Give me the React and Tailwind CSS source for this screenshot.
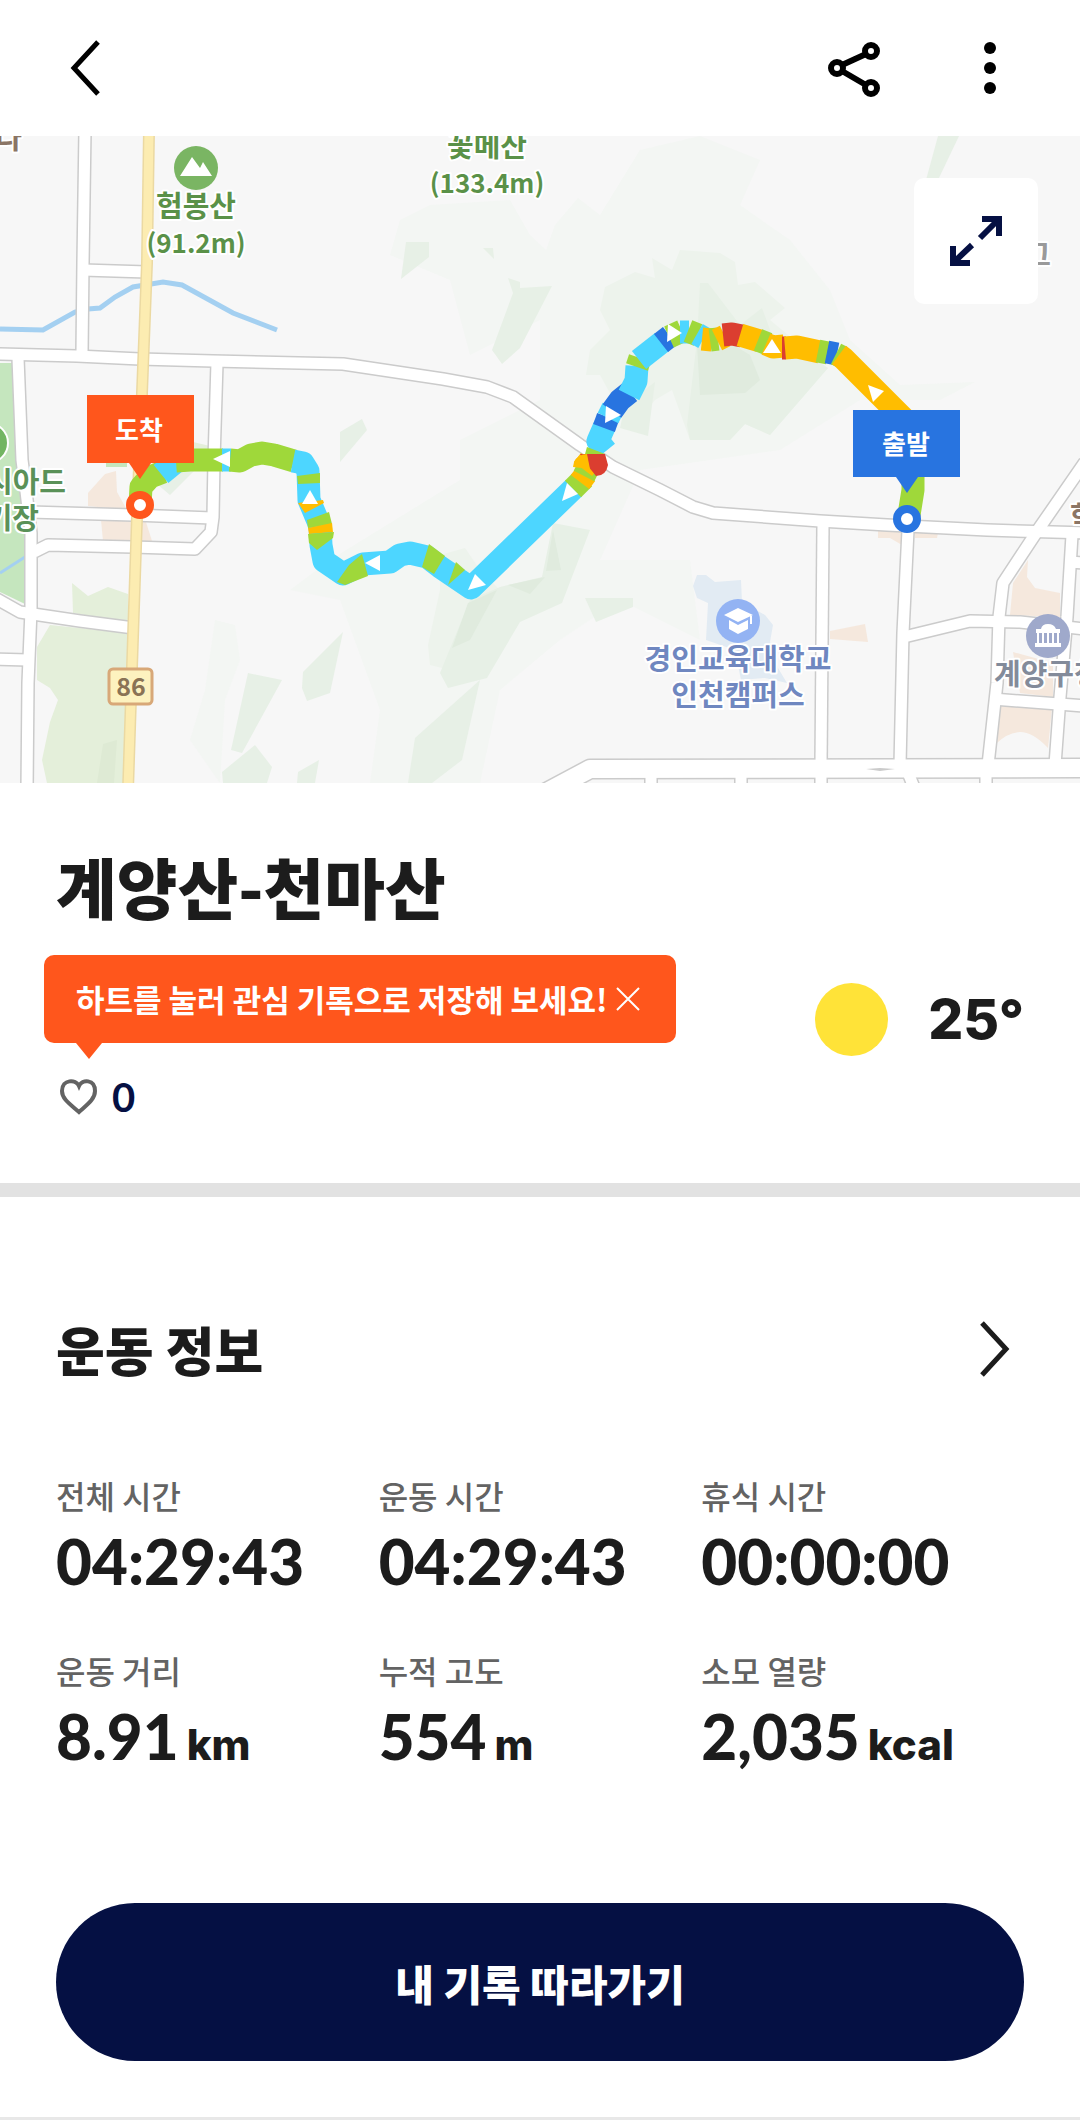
import { useState } from "react";

const CYAN = "#4dd6ff";
const BLUE = "#2874e0";
const GREEN = "#9fd83a";
const AMBER = "#ffbd00";
const RED = "#db3e30";

// Track pieces coloured by speed
const segments = [
  { d: "M140 505 L141 487 L150 477 L163 472", color: GREEN },
  { d: "M161 474 L178 460", color: CYAN },
  { d: "M176 461 L190 460 L223 460", color: GREEN },
  { d: "M222 460 L231 460", color: CYAN },
  { d: "M230 460 L240 461 L251 455 L262 453 L274 455 L294 461", color: GREEN },
  {
    d: "M293 461 L303 463 L308 471 L309 500 L320 526 L321 545 L324 561 L343 574 L363 564 L390 562 L400 555 L410 553 L427 557 L440 567 L471 588 L574 488",
    color: CYAN,
  },
  { d: "M297 476 L320 473 L320 483 L298 484 Z", color: GREEN, fill: true },
  { d: "M298 503 L323 500 L324 503 L305 513 Z", color: AMBER, fill: true },
  { d: "M307 520 L329 512 L332 524 L308 528 Z", color: GREEN, fill: true },
  { d: "M308 528 L332 523 L333 532 L309 534 Z", color: AMBER, fill: true },
  { d: "M308 534 L334 532 L333 538 L317 550 L309 543 Z", color: GREEN, fill: true },
  { d: "M349 565 L362 554 L368 576 L345 585 L337 582 Z", color: GREEN, fill: true },
  { d: "M429 544 L445 556 L434 574 L422 567 Z", color: GREEN, fill: true },
  { d: "M456 562 L465 570 L448 585 Z", color: GREEN, fill: true },
  { d: "M573 489 L584 478", color: GREEN },
  { d: "M580 482 L586 474", color: AMBER },
  { d: "M584 476 L588 468", color: GREEN },
  { d: "M583 469 L590 460", color: AMBER },
];

const upperSegments = [
  { d: "M606 451 L598 441 L605 425", color: CYAN },
  { d: "M604 428 L608 417", color: BLUE },
  { d: "M608 418 L613 408", color: CYAN },
  { d: "M612 411 L620 400 L630 392", color: BLUE },
  { d: "M629 395 L636 381 L637 366", color: CYAN },
  { d: "M637 367 L640 358", color: GREEN },
  { d: "M639 360 L662 342", color: CYAN },
  { d: "M661 343 L670 336", color: BLUE },
  { d: "M669 337 L682 331", color: GREEN },
  { d: "M680 332 L689 332", color: CYAN },
  { d: "M688 331 L698 335", color: GREEN },
  { d: "M697 334 L704 338", color: CYAN },
  { d: "M702 339 L712 340", color: AMBER },
  { d: "M710 340 L718 339", color: GREEN },
  { d: "M717 340 L725 336", color: AMBER },
  { d: "M723 335 L732 334 L742 336", color: RED },
  { d: "M740 335 L760 341", color: AMBER },
  { d: "M758 340 L768 344", color: GREEN },
  { d: "M766 344 L773 347 L784 346", color: AMBER },
  { d: "M782 348 L786 348", color: RED },
  { d: "M785 348 L797 347 L820 352", color: AMBER },
  { d: "M818 351 L828 353", color: GREEN },
  { d: "M827 352 L837 354", color: BLUE },
  { d: "M836 354 L842 357", color: GREEN },
  { d: "M839 355 L843 358 L905 420", color: AMBER },
  { d: "M913 474 L913 490 L909 515", color: GREEN },
];

const arrows = [
  "213,459 230,451 230,467",
  "310,490 318,504 302,504",
  "365,563 380,555 380,571",
  "475,574 486,585 468,590",
  "567,483 578,494 562,501",
  "606,406 621,415 605,423",
  "668,324 682,333 667,342",
  "772,339 781,353 763,353",
  "868,385 884,391 873,402",
];

const roads = [
  "M85 130 L83 263 L82 353",
  "M83 270 L147 272",
  "M-5 354 L77 356 L140 359 L213 361 L343 364 L403 373 L443 379 L487 387 L513 397 L580 445 L613 467 L660 490 L693 507 L713 513 L820 521 L887 525 L987 530 L1085 533",
  "M18 358 L22 460 L25 483 L31 533 L31 610 L28 683 L27 790",
  "M217 363 L214 460 L213 517 L211 532 L195 549 L133 547 L48 545 L34 552",
  "M30 512 L133 515 L212 518",
  "M-5 598 L20 612 L33 614 L80 621 L134 628",
  "M-5 659 L28 660",
  "M823 525 L821 765",
  "M908 530 L903 633 L900 765",
  "M904 637 L970 621 L1020 622 L1085 629",
  "M1085 462 L1040 527 L1003 583 L999 617 L997 683 L988 765",
  "M1072 535 L1067 617 L1060 697 L1055 765",
  "M993 699 L1085 706",
  "M1070 562 L1085 563",
  "M651 770 L651 790",
  "M741 770 L741 790",
  "M821 770 L821 790",
  "M905 765 L915 790",
  "M986 770 L986 790",
];

const stats = [
  { label: "전체 시간", value: "04:29:43" },
  { label: "운동 시간", value: "04:29:43" },
  { label: "휴식 시간", value: "00:00:00" },
  { label: "운동 거리", value: "8.91", unit: "km" },
  { label: "누적 고도", value: "554", unit: "m" },
  { label: "소모 열량", value: "2,035", unit: "kcal" },
];

function Track({ items }) {
  return items.map((s) => (
    <path
      key={s.d}
      d={s.d}
      fill={s.fill ? s.color : "none"}
      stroke={s.fill ? "none" : s.color}
      strokeWidth="23"
      strokeLinejoin="round"
    />
  ));
}

function CourseMap() {
  return (
    <svg
      viewBox="0 136 1080 647"
      className="block h-auto w-full"
      role="img"
      aria-label="코스 지도"
    >
      <rect y="136" width="1080" height="647" fill="#f7f7f7" />

      {/* Hills */}
      <g fill="#f3f6f3">
        <path d="M430 205 L510 200 L530 235 L546 250 L555 225 L578 198 L600 215 L640 150 L700 136 L760 160 L740 205 L790 240 L830 290 L850 340 L900 385 L975 382 L940 400 L860 400 L780 450 L640 470 L600 560 L690 560 L700 640 L620 600 L560 640 L500 690 L480 783 L370 783 L380 710 L340 600 L290 590 L330 560 L460 480 L460 440 L540 400 L540 320 L470 355 L450 280 L390 255 L400 220 Z" />
        <path d="M215 620 L235 625 L240 660 L225 700 L220 783 L190 740 L205 690 Z" />
      </g>
      <g fill="#edf3ec">
        <path d="M605 287 L635 272 L655 278 L652 258 L672 270 L680 250 L720 253 L735 262 L738 285 L755 282 L785 308 L770 320 L828 368 L770 435 L745 424 L730 440 L690 440 L672 390 L655 400 L630 430 L600 375 L586 375 L590 350 L610 330 L600 310 Z" />
        <path d="M440 555 L465 548 L480 570 L500 590 L470 620 L450 670 L430 665 L428 645 L440 590 Z" />
      </g>
      <g fill="#e7f0e6">
        <path d="M406 242 L429 242 L429 257 L401 279 Z" />
        <path d="M483 248 L493 248 L494 259 Z" />
        <path d="M508 278 L520 282 L520 288 L552 286 L520 348 L502 364 L492 350 L513 293 Z" />
        <path d="M655 382 L648 436 L620 428 L625 405 Z" />
        <path d="M700 283 L708 283 L740 325 L762 308 L772 335 L828 368 L770 435 L745 424 L730 440 L690 440 L687 425 L697 340 Z" />
        <path d="M470 600 L500 587 L542 577 L553 523 L590 530 L562 603 L520 622 L487 678 L448 688 L440 673 Z" />
        <path d="M480 680 L462 760 L432 783 L408 783 L415 738 Z" />
        <path d="M585 598 L633 598 L633 607 L596 622 Z" />
        <path d="M248 673 L282 680 L242 753 L231 750 Z" />
        <path d="M343 632 L330 693 L307 701 L302 688 L303 672 Z" />
        <path d="M255 745 L272 767 L267 783 L223 783 L222 772 Z" />
        <path d="M298 772 L319 760 L315 783 L297 783 Z" />
        <path d="M938 136 L959 136 L938 180 L926 180 Z" />
        <path d="M340 432 L362 419 L367 430 L340 462 Z" />
        <path d="M150 478 L200 465 L170 495 Z" />
      </g>
      <g fill="#e0ebde">
        <path d="M725 340 L750 355 L760 380 L745 393 L700 395 L697 345 Z" />
        <path d="M553 530 L561 570 L546 571 Z" />
        <path d="M508 585 L545 577 L530 594 Z" />
        <path d="M468 603 L497 590 L470 640 L452 648 Z" />
      </g>

      {/* Parks and built-up blocks */}
      <path d="M0 363 L12 363 L17 460 L25 540 L25 604 L0 592 Z" fill="#c5e6be" />
      <path d="M0 573 L25 557" stroke="#a4d0f1" strokeWidth="3" />
      <g fill="#e4efda">
        <path d="M50 625 L128 633 L123 783 L47 783 L42 760 L50 722 L58 700 L50 688 L37 680 L37 647 Z" />
        <path d="M72 583 L88 596 L108 587 L128 594 L128 622 L73 613 Z" />
        <path d="M193 442 L210 446 L210 455 L193 455 Z" />
      </g>
      <path d="M103 744 L117 740 L114 783 L97 783 Z" fill="#deead4" />
      <path d="M106 460 H127 V467 H106 Z" fill="#c5e6be" />
      <g fill="#f5e8dd">
        <path d="M88 493 L105 474 L116 471 L117 492 L127 510 L88 506 Z" />
        <path d="M101 520 L146 522 L152 541 L103 541 Z" />
        <path d="M1028 560 L1027 577 L1035 588 L1060 593 L1060 617 L1010 615 L1013 583 Z" />
        <path d="M998 706 L1052 708 L1048 748 Q1033 732 1020 732 Q1007 733 997 743 Z" />
        <path d="M1013 652 L1053 663 L1053 697 L1020 693 Z" />
        <path d="M830 631 L865 624 L868 642 L830 639 Z" />
        <path d="M878 531 L902 531 L902 545 L890 538 L878 538 Z" />
        <path d="M915 532 L938 533 L937 538 L915 538 Z" />
      </g>
      <path
        d="M693 586 L697 575 L706 575 L715 582 L741 580 L742 602 L765 615 L773 625 L770 642 L778 668 L787 683 L765 678 L741 680 L735 650 L706 640 L708 603 L697 598 Z"
        fill="#e2ebf3"
      />

      {/* Stream */}
      <path
        d="M0 329 L43 330 L75 312 L88 309 L100 308 L115 297 L133 287 L163 282 L182 285 L233 313 L277 330"
        fill="none"
        stroke="#a4d0f1"
        strokeWidth="5"
      />

      {/* Roads: grey casing first, then the white surface */}
      <g fill="none" stroke="#cbcbcb" strokeLinejoin="round">
        {roads.map((d) => (
          <path key={d} d={d} strokeWidth="14" />
        ))}
        <path d="M545 793 L590 769 L1085 768" strokeWidth="21" />
      </g>
      <g fill="none" stroke="#ffffff" strokeLinejoin="round">
        {roads.map((d) => (
          <path key={d} d={d} strokeWidth="11" />
        ))}
        <path d="M545 793 L590 769 L1085 768" strokeWidth="18" />
      </g>
      <path d="M866 769 L880 768 L895 769 L880 771 Z" fill="#cbcbcb" />
      <path
        d="M149 130 L147 263 L142 393 L137 517 L132 667 L128 790"
        fill="none"
        stroke="#ebd9a2"
        strokeWidth="12"
      />
      <path
        d="M149 130 L147 263 L142 393 L137 517 L132 667 L128 790"
        fill="none"
        stroke="#fcecb1"
        strokeWidth="9"
      />

      {/* Place names */}
      <g
        className="font-['Noto_Sans_CJK_KR',sans-serif] font-bold"
        fontSize="29"
        stroke="#ffffff"
        strokeWidth="4"
        strokeLinejoin="round"
        paintOrder="stroke"
      >
        <g fill="#5a9148" textAnchor="middle">
          <text x="196" y="217">험봉산</text>
          <text x="196" y="253" fontSize="26">(91.2m)</text>
          <text x="487" y="157">꽃메산</text>
          <text x="487" y="193" fontSize="26">(133.4m)</text>
        </g>
        <g fill="#5a9158" textAnchor="end">
          <text x="66" y="493">시아드</text>
          <text x="39" y="529">기장</text>
        </g>
        <g fill="#6f87c0" textAnchor="middle">
          <text x="738" y="670">경인교육대학교</text>
          <text x="738" y="706">인천캠퍼스</text>
        </g>
        <text x="994" y="685" fill="#838b9a">계양구청</text>
        <text x="22" y="149" fill="#8b7565" textAnchor="end">다</text>
        <text x="1070" y="528" fill="#8b7565">학</text>
        <text x="1051" y="266" fill="#9a9a9a" textAnchor="end">그</text>
      </g>

      {/* Place pins */}
      <circle cx="196" cy="168" r="22" fill="#7ab563" />
      <path d="M180 176 L192 157 L200 168 L203 162 L212 176 Z" fill="#ffffff" />
      <circle cx="-12" cy="443" r="20" fill="#72b562" stroke="#ffffff" strokeWidth="2" />
      <circle cx="738" cy="621" r="22" fill="#93b3f3" />
      <g fill="#ffffff">
        <path d="M724 615 L738 608 L753 615 L738 622 Z" />
        <path d="M729 620 L738 625 L748 620 V629 L738 634 L729 629 Z" />
        <path d="M750 616 H752 V624 H750 Z" />
      </g>
      <circle cx="1048" cy="636" r="22" fill="#9fa9cb" />
      <g fill="#ffffff">
        <path d="M1036 633 V629 H1041 Q1042 624 1048 624 Q1054 624 1056 629 H1060 V633 Z" />
        <path d="M1037 633 H1039 V644 H1037 Z M1042 633 H1044 V644 H1042 Z M1047 633 H1049 V644 H1047 Z M1052 633 H1054 V644 H1052 Z M1057 633 H1059 V644 H1057 Z" />
        <path d="M1035 643 H1061 V647 H1035 Z" />
      </g>
      <rect x="109" y="669" width="43" height="35" rx="4" fill="#fdf2bf" stroke="#d8a878" strokeWidth="3" />
      <text
        x="131"
        y="696"
        textAnchor="middle"
        fontSize="25"
        fill="#8a7355"
        className="font-['Noto_Sans_CJK_KR',sans-serif] font-bold"
      >
        86
      </text>

      {/* Recorded track */}
      <Track items={segments} />
      <Track items={upperSegments} />
      <path d="M580 454 H605 L608 465 Q606 476 596 476 L588 466 Z" fill={RED} />
      <path d="M574 462 Q578 454 587 454 L590 469 L573 467 Z" fill={AMBER} />
      <path d="M587 447 L605 454 L585 454 Z" fill={GREEN} />
      {arrows.map((points) => (
        <polygon key={points} points={points} fill="#ffffff" />
      ))}

      {/* Finish and start flags */}
      <g className="font-['Noto_Sans_CJK_KR',sans-serif] font-bold" fontSize="26" textAnchor="middle">
        <circle cx="140" cy="505" r="10" fill="#ffffff" stroke="#ff561c" strokeWidth="8" />
        <path d="M87 395 H194 V463 H151 L140 479 L129 463 H87 Z" fill="#ff561c" />
        <text x="139" y="440" fill="#ffffff">도착</text>
        <circle cx="907" cy="519" r="10" fill="#ffffff" stroke="#2874e0" strokeWidth="8" />
        <path d="M853 410 H960 V477 H918 L907 493 L896 477 H853 Z" fill="#2874e0" />
        <text x="906" y="454" fill="#ffffff">출발</text>
      </g>
    </svg>
  );
}

function App() {
  const [hintOpen, setHintOpen] = useState(true);
  const [liked, setLiked] = useState(false);

  return (
    <div className="bg-white font-['Noto_Sans_CJK_KR',sans-serif] text-[#1c1c1c]">
      <header className="flex h-[136px] items-center justify-between pr-15 pl-14 text-black">
        <button type="button" aria-label="뒤로">
          <svg className="size-15" viewBox="0 0 60 60" fill="none" stroke="currentColor" strokeWidth="5">
            <path d="M42 4 L18 30 L42 56" />
          </svg>
        </button>
        <div className="flex items-center gap-19">
          <button type="button" aria-label="공유">
            <svg className="size-15" viewBox="0 0 60 60" fill="none" stroke="currentColor" strokeWidth="6">
              <circle cx="13" cy="30" r="6" />
              <circle cx="47" cy="13" r="6" />
              <circle cx="47" cy="50" r="6" />
              <path d="M18 27 L42 16 M18 33 L42 47" />
            </svg>
          </button>
          <button type="button" aria-label="더보기">
            <svg className="size-15" viewBox="0 0 60 60" fill="currentColor">
              <circle cx="30" cy="10" r="6" />
              <circle cx="30" cy="30" r="6" />
              <circle cx="30" cy="50" r="6" />
            </svg>
          </button>
        </div>
      </header>

      <div className="relative">
        <CourseMap />
        <button
          type="button"
          aria-label="지도 확대"
          className="absolute top-[42px] right-[42px] flex h-[126px] w-[124px] items-center justify-center rounded-[10px] bg-white text-[#051043]"
        >
          <svg className="size-15" viewBox="0 0 60 60" fill="none" stroke="currentColor" strokeWidth="6">
            <path d="M36 8 H53 V25 M53 8 L34 27" />
            <path d="M7 35 V52 H24 M7 52 L26 34" />
          </svg>
        </button>
      </div>

      <section className="px-14 py-16">
        <h1 className="text-[66px] leading-[76px] font-black">계양산-천마산</h1>
        <div className="mt-8 flex items-start justify-between">
          <div className="-ml-3">
            {hintOpen && (
              <div className="relative flex h-[88px] items-center gap-2 rounded-[10px] bg-[#ff561c] pr-9 pl-8 text-white">
                <p className="text-[31px] font-bold">하트를 눌러 관심 기록으로 저장해 보세요!</p>
                <button type="button" aria-label="닫기" onClick={() => setHintOpen(false)}>
                  <svg className="size-6" viewBox="0 0 24 24" fill="none" stroke="currentColor" strokeWidth="2">
                    <path d="M1 1 L23 23 M23 1 L1 23" />
                  </svg>
                </button>
                <svg className="absolute top-full left-8 h-4 w-[26px]" viewBox="0 0 26 16" fill="#ff561c">
                  <path d="M0 0 H26 L13 16 Z" />
                </svg>
              </div>
            )}
            <button
              type="button"
              aria-label="관심 기록"
              aria-pressed={liked}
              onClick={() => setLiked(!liked)}
              className="mt-8 ml-3 flex h-11 items-center gap-3"
            >
              <svg
                className="size-11"
                viewBox="0 0 44 44"
                fill={liked ? "#ff561c" : "none"}
                stroke="#636363"
                strokeWidth="4"
              >
                <path d="M23 11 C20 4 6 4 6 16 C6 24 14 29 23 37 C32 29 39 24 39 16 C39 4 26 4 23 11 Z" />
              </svg>
              <span className="font-['Lato',sans-serif] text-[40px] leading-10 font-bold text-[#051043]">
                {liked ? 1 : 0}
              </span>
            </button>
          </div>
          <div className="mt-7 flex items-center gap-10">
            <span className="size-[73px] rounded-full bg-[#ffe338]" role="img" aria-label="맑음" />
            <span className="font-['Inter',sans-serif] text-[55px] leading-[73px] font-extrabold">25°</span>
          </div>
        </div>
      </section>

      <div className="h-[14px] bg-[#e2e2e2]" />

      <section className="px-14 pt-[122px] pb-14">
        <div className="flex h-[60px] items-center justify-between">
          <h2 className="text-[53px] leading-[60px] font-black">운동 정보</h2>
          <a href="#detail" aria-label="운동 정보 상세">
            <svg className="size-15" viewBox="0 0 60 60" fill="none" stroke="currentColor" strokeWidth="5">
              <path d="M18 4 L42 30 L18 56" />
            </svg>
          </a>
        </div>

        <dl className="mt-24 grid grid-cols-3 gap-y-14">
          {stats.map((s) => (
            <div key={s.label}>
              <dt className="text-[32px] leading-[40px] font-medium text-[#636363]">{s.label}</dt>
              <dd className="mt-[14px] flex h-[65px] items-baseline gap-2 font-['Lato',sans-serif] text-[62px] leading-[65px] font-black">
                {s.value}
                {s.unit && (
                  <span className="font-['Inter',sans-serif] text-[42px] leading-none font-extrabold">{s.unit}</span>
                )}
              </dd>
            </div>
          ))}
        </dl>

        <button
          type="button"
          className="mt-[134px] h-[158px] w-full rounded-full bg-[#051043] text-[42px] font-black text-white"
        >
          내 기록 따라가기
        </button>
      </section>
      <div className="h-[3px] bg-[#e8e8e8]" />
    </div>
  );
}

export default App;
